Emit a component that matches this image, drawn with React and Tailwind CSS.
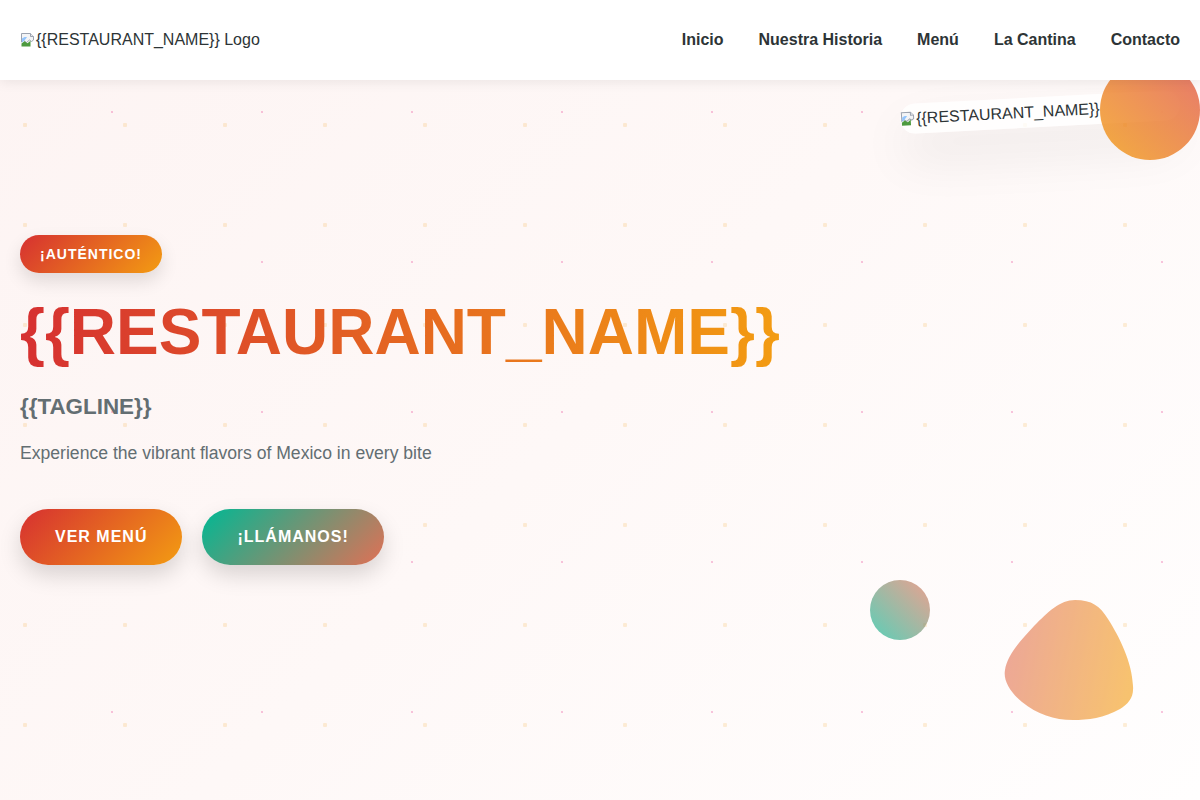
import React from "react";

const navLinks = ["Inicio", "Nuestra Historia", "Menú", "La Cantina", "Contacto"];

function BrokenImage() {
  return (
    <svg width="16" height="16" viewBox="0 0 16 16" className="shrink-0">
      <path d="M1.5 1.5h9l3 3v3.5l-2 1.5-2-1.5-3 2.5-3-2-2 1.5z" fill="#f3f4f6" stroke="#9ca3af" strokeWidth="1" />
      <path d="M10.5 1.5v3h3" fill="#e5e7eb" stroke="#9ca3af" strokeWidth="1" />
      <path d="M2 6.5c1.5-1.5 3.5-2 5-1.2L4 9 2 10.5z" fill="#93c5fd" />
      <path d="M1.5 14.5v-3l3-2.2 3 2 3-2.5v5.7z" fill="#4d9a3f" />
    </svg>
  );
}

function Blob() {
  return (
    <svg width="130" height="120" viewBox="0 0 130 120" className="absolute left-[1004px] top-[600px] opacity-60">
      <defs>
        <linearGradient id="blobFill" x1="0" y1="0.4" x2="1" y2="0.6">
          <stop offset="0" stopColor="#e17055" />
          <stop offset="1" stopColor="#f39c12" />
        </linearGradient>
      </defs>
      <path
        d="M71 0C88 0 96 6 104 19C116 38 128 62 129 86C130 98 124 104 116 109C100 118 84 120 69 120C50 120 33 114 18 102C6 92 -1 80 1 70C3 56 15 42 30 26C44 12 56 0 71 0Z"
        fill="url(#blobFill)"
      />
    </svg>
  );
}

export default function App() {
  return (
    <div
      className="relative min-h-[800px] overflow-hidden bg-[radial-gradient(circle_at_25px_25px,rgba(243,156,18,0.16)_2px,transparent_2.5px),radial-gradient(circle_at_112px_112px,rgba(232,67,147,0.3)_1px,transparent_1.5px),linear-gradient(135deg,#fdf4f3_0%,#fef8f7_50%,#fffefe_100%)] bg-[length:100px_100px,150px_150px,100%_100%] font-['Liberation_Sans',Arial,sans-serif]"
    >
      <header className="relative z-30 flex h-20 items-center justify-between bg-white px-5 shadow-[0_2px_12px_rgba(0,0,0,0.08)]">
        <div className="flex items-center text-base text-[#2d3436]">
          <BrokenImage />
          <span>{"{{RESTAURANT_NAME}}"} Logo</span>
        </div>
        <nav className="flex items-center gap-[35px]">
          {navLinks.map((link) => (
            <a key={link} href="#" className="text-base font-bold text-[#2d3436]">
              {link}
            </a>
          ))}
        </nav>
      </header>

      {/* floating hero picture + decorative shapes */}
      <div className="absolute left-[900px] top-[97px] z-10 flex h-[30px] w-[280px] rotate-[-3deg] items-center rounded-[20px] bg-white/80 text-base text-[#2d3436] shadow-[0_25px_50px_rgba(0,0,0,0.08)]">
        <BrokenImage />
        <span>{"{{RESTAURANT_NAME}}"}</span>
      </div>
      <div className="absolute left-[1100px] top-[60px] z-20 h-[100px] w-[100px] rounded-full bg-[linear-gradient(45deg,#f39c12,#e1574a)] opacity-80" />
      <div className="absolute left-[870px] top-[580px] h-[60px] w-[60px] rounded-full bg-[linear-gradient(45deg,#00b894,#e17055)] opacity-65" />
      <Blob />

      <main className="relative z-10 px-5 pt-[155px]">
        <span className="inline-block rounded-full bg-[linear-gradient(135deg,#d63031,#f39c12)] px-5 py-[10px] text-sm leading-[18px] font-bold tracking-[1px] text-white shadow-[0_8px_18px_rgba(0,0,0,0.12)]">
          ¡AUTÉNTICO!
        </span>
        <h1 className="mt-[24px] w-fit bg-[linear-gradient(90deg,#d63031,#f39c12)] bg-clip-text text-[64px] leading-[70px] font-bold text-transparent">
          {"{{RESTAURANT_NAME}}"}
        </h1>
        <h2 className="mt-[26px] text-[22.4px] leading-[28px] font-bold text-[#636e72]">
          {"{{TAGLINE}}"}
        </h2>
        <p className="mt-[20px] text-[17.6px] leading-[24px] text-[#636e72]">
          Experience the vibrant flavors of Mexico in every bite
        </p>
        <div className="mt-[44px] flex gap-5">
          <a
            href="#"
            className="rounded-full bg-[linear-gradient(135deg,#d63031,#f39c12)] px-[35px] py-4 text-base leading-6 font-bold tracking-[1px] text-white shadow-[0_10px_22px_rgba(0,0,0,0.15)]"
          >
            VER MENÚ
          </a>
          <a
            href="#"
            className="rounded-full bg-[linear-gradient(135deg,#00b894,#e17055)] px-[35px] py-4 text-base leading-6 font-bold tracking-[1px] text-white shadow-[0_10px_22px_rgba(0,0,0,0.15)]"
          >
            ¡LLÁMANOS!
          </a>
        </div>
      </main>
    </div>
  );
}
